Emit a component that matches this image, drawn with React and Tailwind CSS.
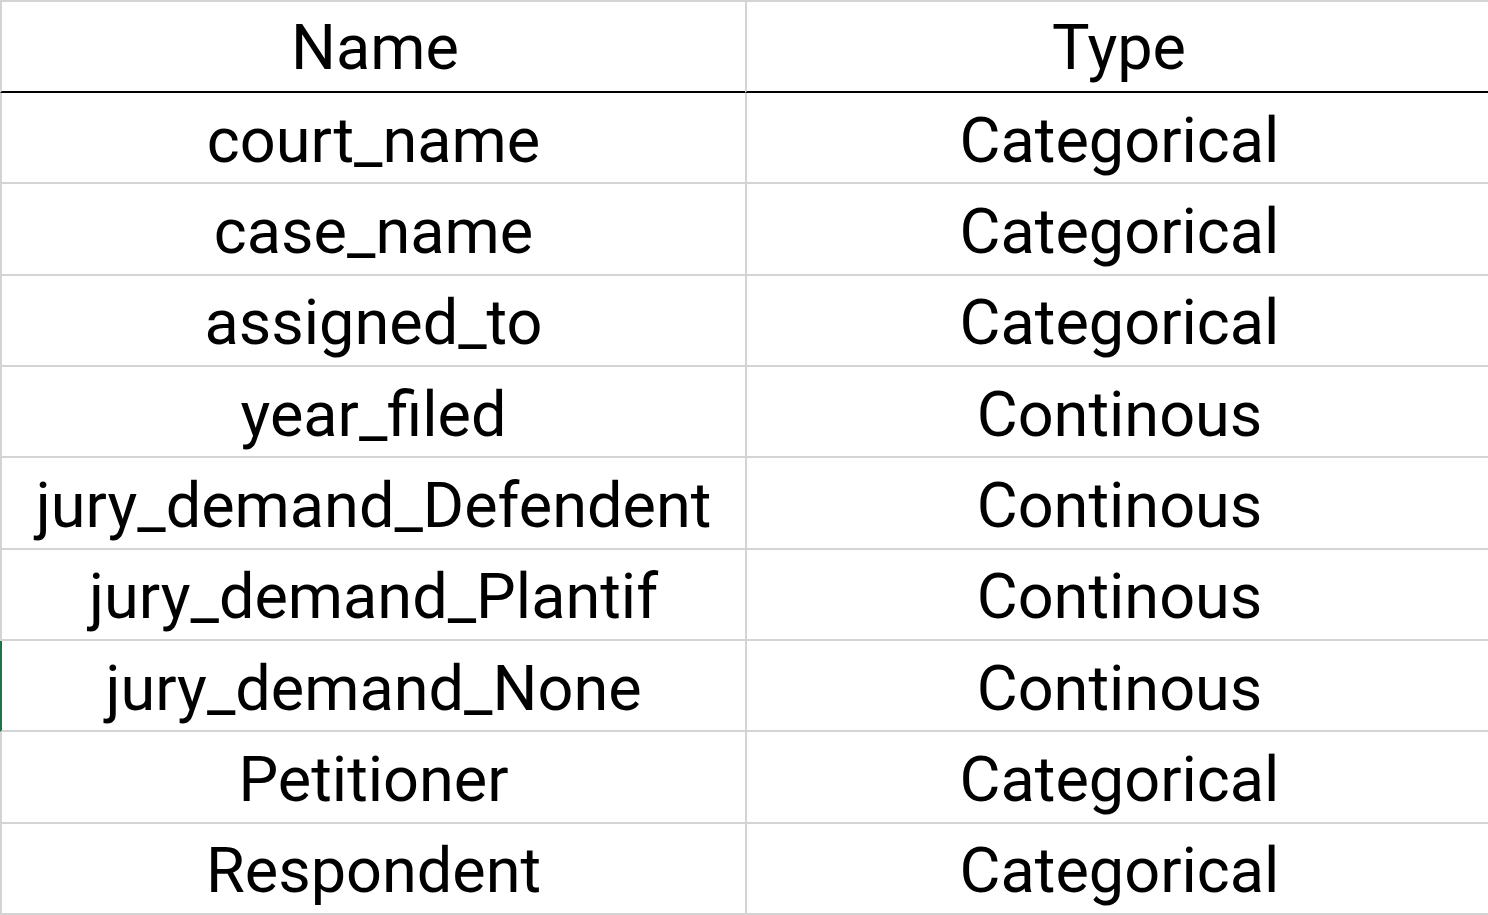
const rows = [
  ['court_name', 'Categorical'],
  ['case_name', 'Categorical'],
  ['assigned_to', 'Categorical'],
  ['year_filed', 'Continous'],
  ['jury_demand_Defendent', 'Continous'],
  ['jury_demand_Plantif', 'Continous'],
  ['jury_demand_None', 'Continous'],
  ['Petitioner', 'Categorical'],
  ['Respondent', 'Categorical'],
];

export default function App() {
  return (
    <div className="w-[1488px] h-[915px] bg-white text-black overflow-hidden font-['Roboto',sans-serif] text-[63px] leading-none">
      {/* header */}
      <div className="grid grid-cols-[745px_1fr] h-[93px] border-t-2 border-[#d4d4d4]">
        <div className="flex items-center justify-center border-l-2 border-[#d4d4d4] border-b-2 border-b-black pt-[2px] pl-[3px]">Name</div>
        <div className="flex items-center justify-center border-l-2 border-[#d4d4d4] border-b-2 border-b-black pt-[2px] pl-[3px]">Type</div>
      </div>

      {rows.map(([name, type], i) => (
        <div key={name} className="grid grid-cols-[745px_1fr] h-[91.33px]">
          <div
            className={
              i === 6
                ? 'flex items-center justify-center border-l-2 border-l-[#217346] border-b-2 border-b-[#d4d4d4] pt-[5px]'
                : 'flex items-center justify-center border-l-2 border-l-[#d4d4d4] border-b-2 border-b-[#d4d4d4] pt-[5px]'
            }
          >
            {name}
          </div>
          <div className="flex items-center justify-center border-l-2 border-[#d4d4d4] border-b-2 pt-[5px] pl-[4px]">{type}</div>
        </div>
      ))}
    </div>
  );
}
